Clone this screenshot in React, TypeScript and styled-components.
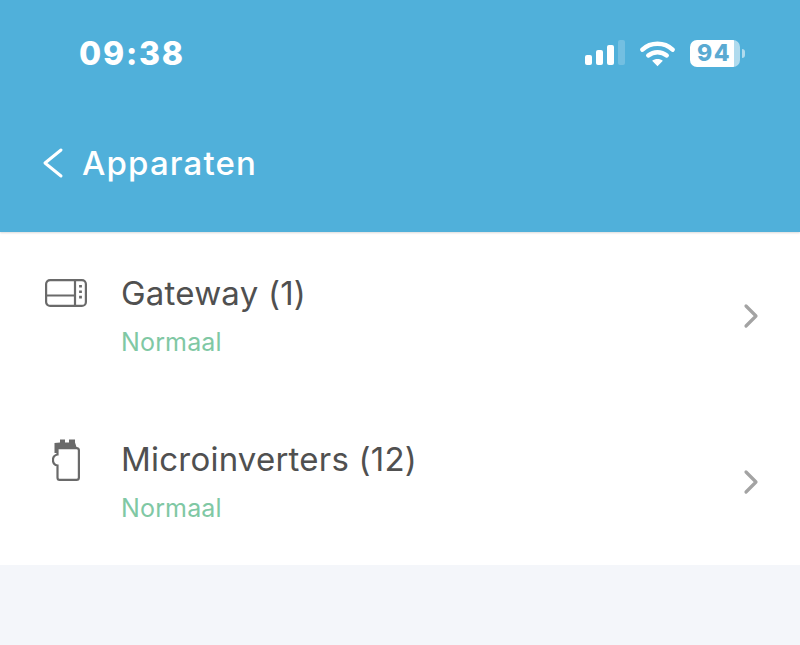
import React from 'react'
import styled, { createGlobalStyle } from 'styled-components'

const GlobalStyle = createGlobalStyle`
  html, body {
    margin: 0;
    padding: 0;
    background: #f4f6fa;
  }
  body {
    font-family: Inter, "Liberation Sans", sans-serif;
  }
`

function SignalIcon() {
  return (
    <svg width="40" height="26" viewBox="0 0 40 26">
      <rect x="0" y="15" width="7" height="10" rx="2" fill="#fff" />
      <rect x="11" y="10" width="7" height="15" rx="2" fill="#fff" />
      <rect x="22" y="5" width="7" height="20" rx="2" fill="#fff" />
      <rect x="33" y="0" width="7" height="25" rx="2" fill="#fff" opacity="0.2" />
    </svg>
  )
}

function WifiIcon() {
  return (
    <svg width="35" height="27" viewBox="0 0 36 27">
      <path d="M2.5 9.5C11 1.5 25 1.5 33.5 9.5" fill="none" stroke="#fff" strokeWidth="4.6" strokeLinecap="round" />
      <path d="M8.5 15.5C14 11 22 11 27.5 15.5" fill="none" stroke="#fff" strokeWidth="4.6" strokeLinecap="round" />
      <path d="M12.5 21L18 26.5L23.5 21C20.5 18.5 15.5 18.5 12.5 21Z" fill="#fff" />
    </svg>
  )
}

function GatewayIcon() {
  return (
    <svg width="42" height="28" viewBox="0 0 42 28" fill="none" stroke="#6a6a6a" strokeWidth="2.2">
      <rect x="1.1" y="1.1" width="39.8" height="25.8" rx="4" />
      <path d="M30 1V27M1 16.5H30" />
      <path d="M35.5 6V22" strokeWidth="2.8" strokeDasharray="2.6 2.8" />
    </svg>
  )
}

function InverterIcon() {
  return (
    <svg width="28" height="42" viewBox="0 0 28 42" fill="none" stroke="#6a6a6a" strokeWidth="2.2">
      <path d="M6 9.1H24.5Q26.9 9.1 26.9 11.5V38.5Q26.9 40.9 24.5 40.9H7.5Q5.5 40.9 5.5 38.5V26.5A5.6 5.6 0 0 1 5.5 15.5V9.1" />
      <path d="M2.5 10V4L8 3.5V0.5H13V3.5H17V0.5H23V3.5L25 9.5H6V14H2.5Z" fill="#6a6a6a" stroke="none" />
    </svg>
  )
}

function App() {
  const devices = [
    { name: 'Gateway (1)', icon: <GatewayIcon />, top: 12, left: 1 },
    { name: 'Microinverters (12)', icon: <InverterIcon />, top: 6, left: 8 },
  ]

  return (
    <Page>
      <GlobalStyle />
      <Header>
        <StatusBar>
          <Clock>09:38</Clock>
          <StatusIcons>
            <SignalIcon />
            <WifiIcon />
            <Battery>
              <BatteryBody>94</BatteryBody>
              <BatteryCap />
            </Battery>
          </StatusIcons>
        </StatusBar>
        <TitleRow>
          <BackIcon width="22" height="32" viewBox="0 0 22 32">
            <path d="M19 3L3 16L19 29" fill="none" stroke="#fff" strokeWidth="3" strokeLinecap="round" strokeLinejoin="round" />
          </BackIcon>
          <Title>Apparaten</Title>
        </TitleRow>
      </Header>
      <List>
        {devices.map((device) => (
          <Row key={device.name}>
            <IconSlot $top={device.top} $left={device.left}>{device.icon}</IconSlot>
            <Info>
              <Name>{device.name}</Name>
              <Status>Normaal</Status>
            </Info>
            <Chevron width="16" height="26" viewBox="0 0 16 26">
              <path d="M3 3L13 13L3 23" fill="none" stroke="#a3a3a3" strokeWidth="3.2" strokeLinecap="round" strokeLinejoin="round" />
            </Chevron>
          </Row>
        ))}
      </List>
    </Page>
  )
}

const Page = styled.div`
  width: 800px;
  height: 645px;
  overflow: hidden;
  background: #f4f6fa;
`
const Header = styled.header`
  height: 232px;
  box-sizing: border-box;
  padding: 32px 55px 0 42px;
  background: #50b0da;
  box-shadow: 0 1px 2px rgba(0, 0, 0, 0.15);
  position: relative;
`
const StatusBar = styled.div`
  display: flex;
  align-items: center;
  justify-content: space-between;
  height: 42px;
  padding-left: 37px;
`
const Clock = styled.div`
  color: #fff;
  font-size: 32px;
  font-weight: 800;
  letter-spacing: 1.8px;
`
const StatusIcons = styled.div`
  display: flex;
  align-items: center;
  gap: 15px;
`
const Battery = styled.div`
  display: flex;
  align-items: center;
  gap: 2px;
`
const BatteryBody = styled.div`
  width: 50px;
  height: 27px;
  box-sizing: border-box;
  padding-right: 2px;
  border-radius: 7px;
  background: linear-gradient(90deg, #fff 88%, rgba(255, 255, 255, 0.55) 88%);
  color: #5aaad2;
  font-size: 23px;
  font-weight: 800;
  line-height: 27px;
  text-align: center;
  letter-spacing: 1.5px;
`
const BatteryCap = styled.div`
  width: 3px;
  height: 9px;
  border-radius: 0 3px 3px 0;
  background: rgba(255, 255, 255, 0.55);
`
const TitleRow = styled.div`
  display: flex;
  align-items: center;
  gap: 18px;
  margin-top: 69px;
`
const BackIcon = styled.svg`
  display: block;
`
const Title = styled.div`
  color: #fff;
  font-size: 33px;
  font-weight: 500;
  line-height: 40px;
  letter-spacing: 1.15px;
`
const List = styled.main`
  height: 333px;
  box-sizing: border-box;
  padding-top: 35px;
  background: #fff;
`
const Row = styled.div`
  display: flex;
  align-items: flex-start;
  height: 166px;
  padding: 0 40px 0 44px;
  box-sizing: border-box;
`
const IconSlot = styled.div<{ $top: number; $left: number }>`
  width: 77px;
  flex-shrink: 0;
  box-sizing: border-box;
  padding-top: ${(p) => p.$top}px;
  padding-left: ${(p) => p.$left}px;
  svg {
    display: block;
  }
`
const Info = styled.div`
  flex: 1;
`
const Name = styled.div`
  color: #505050;
  font-size: 33px;
  line-height: 52px;
  letter-spacing: 0.22px;
`
const Status = styled.div`
  color: #80c8a4;
  font-size: 25px;
  line-height: 40px;
  margin-top: 3px;
  letter-spacing: 0.15px;
`
const Chevron = styled.svg`
  display: block;
  margin-top: 36px;
  transform: translateX(-1px);
`

export default App
